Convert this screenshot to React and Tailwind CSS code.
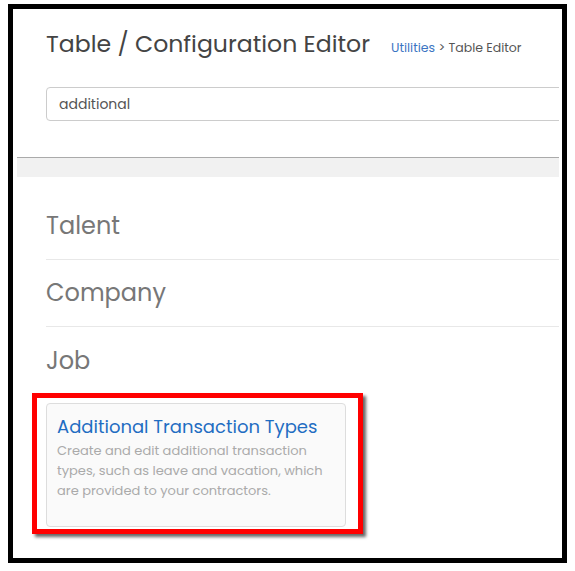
export default function App() {
  const font = { fontFamily: '"Poppins", "Open Sans", "Liberation Sans", sans-serif' };
  return (
    <div className="w-[575px] h-[571px] bg-white pt-[4px] pl-[8px]" style={font}>
      <div className="w-[559px] h-[559px] border-[5px] border-black bg-white pl-[4px] pr-[3px] overflow-hidden">
        <div className="w-full h-full overflow-hidden">
          {/* header */}
          <div className="pl-[29px] pt-[17px] flex items-baseline">
            <h1 className="text-[23.6px] leading-[36px] text-[#444] whitespace-nowrap">
              Table / Configuration Editor
            </h1>
            <div className="ml-[21px] text-[12.5px] whitespace-nowrap text-[#555]">
              <span className="text-[#3b74c2]">Utilities</span> &gt; Table Editor
            </div>
          </div>
          <div className="pl-[29px] mt-[25px]">
            <div className="w-[560px] h-[34px] border border-[#ccc] rounded-[4px] flex items-center pl-[12px] text-[14px] text-[#555]">
              additional
            </div>
          </div>
          <div className="mt-[36px] h-[20px] border-t border-[#aaa] bg-[#f1f1f1]" />
          <div className="pl-[29px]">
            <div className="h-[83px] border-b border-[#e8e8e8] flex items-end pb-[17px]">
              <span className="text-[24px] leading-[32px] text-[#777]">Talent</span>
            </div>
            <div className="h-[67px] border-b border-[#e8e8e8] flex items-end pb-[17px]">
              <span className="text-[24px] leading-[32px] text-[#777]">Company</span>
            </div>
            <div className="h-[50px] flex items-end">
              <span className="text-[24px] leading-[32px] text-[#777]">Job</span>
            </div>
            <div className="relative mt-[26px] w-[300px] h-[124px] bg-[#fafafa] border border-[#ddd] rounded-[4px] px-[10px] pt-[11px]">
              <div className="text-[18px] leading-[24px] text-[#1f6dc2] whitespace-nowrap">Additional Transaction Types</div>
              <div className="mt-[2px] text-[13px] leading-[20px] text-[#aaa]">
                Create and edit additional transaction types, such as leave and vacation, which are provided to your contractors.
              </div>
              <div className="absolute left-[-15px] top-[-11px] right-[-18px] bottom-[-8px] border-[5px] border-[#ff0000] shadow-[3px_3px_3px_rgba(0,0,0,0.6)] pointer-events-none" />
            </div>
          </div>
        </div>
      </div>
    </div>
  );
}
